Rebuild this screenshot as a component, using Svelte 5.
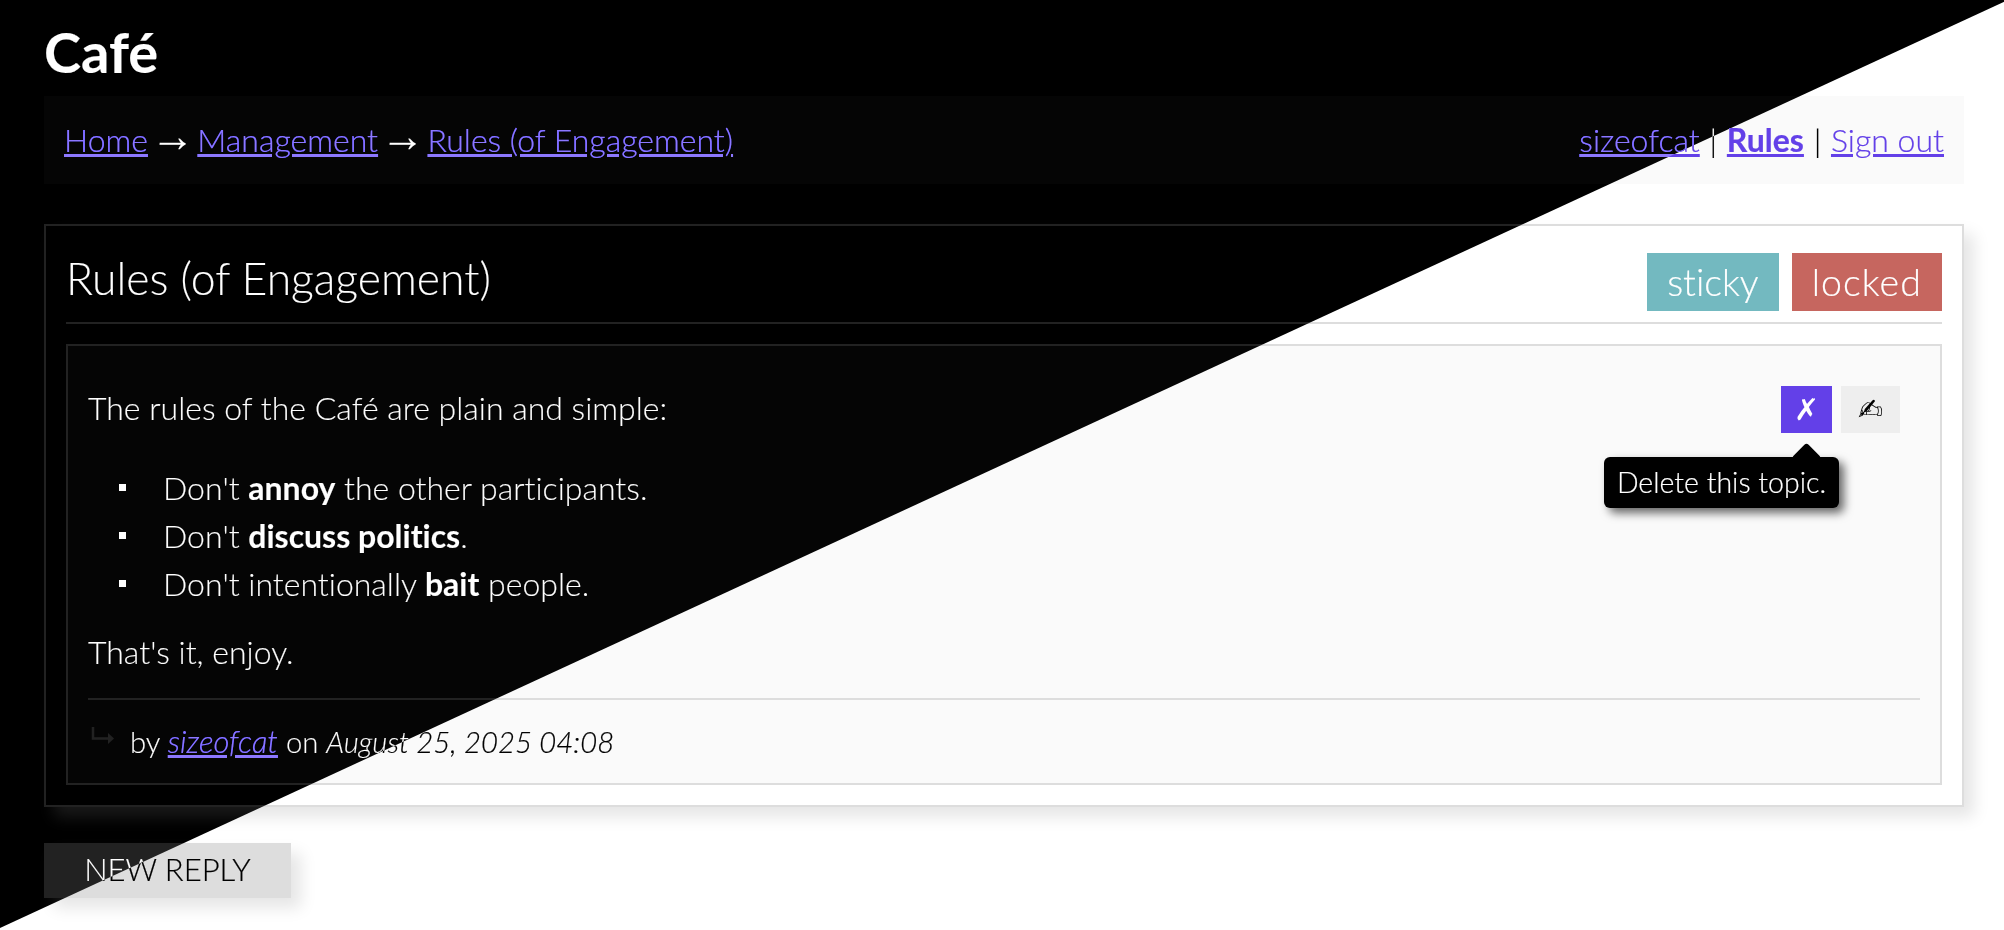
<script lang="ts">
  const rules = [
    { a: "Don't ", b: "annoy", c: " the other participants." },
    { a: "Don't ", b: "discuss politics", c: "." },
    { a: "Don't intentionally ", b: "bait", c: " people." },
  ];
</script>

<div class="page">
  <h1>Café</h1>

  <nav class="bar">
    <div>
      <a href="#home">Home</a> <span class="arr">→</span>
      <a href="#management">Management</a> <span class="arr">→</span>
      <a href="#rules">Rules (of Engagement)</a>
    </div>
    <div>
      <a href="#me">sizeofcat</a> <span class="sep">|</span>
      <a href="#rules" class="cur">Rules</a> <span class="sep">|</span>
      <a href="#out">Sign out</a>
    </div>
  </nav>

  <section class="topic">
    <header class="head">
      <h2>Rules (of Engagement)</h2>
      <div class="tags">
        <span class="tag sticky">sticky</span>
        <span class="tag locked">locked</span>
      </div>
    </header>

    <article class="post">
      <div class="top">
        <p>The rules of the Café are plain and simple:</p>
        <div class="actions">
          <div class="delwrap">
            <button class="btn del">✗</button>
            <div class="tip">Delete this topic.</div>
          </div>
          <button class="btn edit">✍</button>
        </div>
      </div>
      <ul>
        {#each rules as r}
          <li>{r.a}<b>{r.b}</b>{r.c}</li>
        {/each}
      </ul>
      <p class="end">That's it, enjoy.</p>
      <footer class="meta">
        <svg class="ret" width="24" height="18" viewBox="0 0 24 18" aria-hidden="true">
          <path d="M2 1V12.5H19" fill="none" stroke="currentColor" stroke-width="2.5" />
          <path d="M17 7l6 5.5-6 5.5z" fill="currentColor" />
        </svg>
        <span>by <a href="#me" class="who"><em>sizeofcat</em></a> on <em>August 25, 2025 04:08</em></span>
      </footer>
    </article>
  </section>

  <button class="reply">NEW REPLY</button>

  <!-- flips everything under the top-left triangle to the dark theme -->
  <svg class="defs" width="0" height="0" aria-hidden="true">
    <filter id="flip-dark" color-interpolation-filters="sRGB" x="0" y="0" width="100%" height="100%">
      <!-- greys invert; the accent purple lands on the lighter dark-theme purple -->
      <feColorMatrix
        type="matrix"
        values="0.0154 -0.7152 -0.3002 0 1
                0.1724 -0.7152 -0.4572 0 1
               -1.2126 -0.7152  0.9278 0 1
                0 0 0 1 0"
      />
    </filter>
  </svg>
  <div class="flip"></div>
</div>

<style>
  :global(body) {
    background: #fff;
  }
  .page {
    position: relative;
    height: 930px;
    box-sizing: border-box;
    padding: 0 40px 0 44px;
    overflow: hidden;
    background: #fff;
    color: #000;
    font-family: Lato, "Noto Sans", sans-serif;
    font-size: 32px;
    font-weight: 300;
    font-variant-ligatures: none;
    -webkit-text-stroke: 0.2px;
    line-height: 48px;
  }
  h1 {
    margin: 0;
    height: 96px;
    font-size: 56px;
    line-height: 104px;
    font-weight: 700;
  }
  a {
    color: #6340e8;
  }
  b {
    font-weight: 700;
  }
  .arr {
    margin: 0 -6px;
    font-family: "Liberation Sans", sans-serif;
    font-size: 44px;
    line-height: 0;
    vertical-align: 1px;
  }
  .sep {
    margin: 0 1px;
  }
  .bar {
    display: flex;
    justify-content: space-between;
    align-items: center;
    height: 88px;
    padding: 0 20px;
    background: #fafafa;
  }
  .cur {
    font-weight: 700;
  }
  .topic {
    margin-top: 40px;
    padding: 27px 20px 20px;
    border: 2px solid #ddd;
    box-shadow: 10px 10px 15px rgba(0, 0, 0, 0.1);
  }
  .head {
    display: flex;
    justify-content: space-between;
    align-items: center;
    padding-bottom: 11px;
    border-bottom: 2px solid #ddd;
  }
  h2 {
    margin: 0 0 8px;
    font-size: 44.5px;
    line-height: 50px;
    font-weight: 300;
  }
  .tags {
    display: flex;
    gap: 13px;
  }
  .tag {
    padding: 0 20px;
    font-size: 37.5px;
    line-height: 58px;
    color: #fff;
  }
  .sticky {
    background: #73b9c0;
  }
  .locked {
    background: #c6665f;
    letter-spacing: 1.1px;
  }
  .post {
    margin-top: 20px;
    padding: 0 20px 17px;
    border: 2px solid #ddd;
    background: #fafafa;
  }
  .top {
    display: flex;
    justify-content: space-between;
    padding-top: 40px;
  }
  .top p {
    margin-top: -2px;
  }
  p {
    margin: 0;
  }
  .actions {
    display: flex;
    gap: 9px;
    margin-right: 20px;
  }
  .delwrap {
    position: relative;
  }
  .btn {
    display: block;
    height: 47px;
    padding: 0;
    border: 0;
    font-family: "DejaVu Sans", sans-serif;
    font-size: 30px;
    line-height: 47px;
    -webkit-text-stroke: 0;
  }
  .del {
    width: 51px;
    background: #6340e8;
    color: #fff;
    font-weight: 700;
  }
  .edit {
    width: 59px;
    background: #eee;
    color: #000;
  }
  .tip {
    position: absolute;
    top: 71px;
    right: -7px;
    width: 235px;
    height: 51px;
    box-sizing: border-box;
    border-radius: 6px;
    background: #000;
    color: #fff;
    font-size: 28.5px;
    line-height: 50px;
    text-align: center;
    white-space: nowrap;
    box-shadow: 5px 5px 10px rgba(0, 0, 0, 0.6);
  }
  .tip::before {
    content: "";
    position: absolute;
    left: 192px;
    top: -10px;
    width: 21px;
    height: 21px;
    border-radius: 3px;
    background: #000;
    transform: rotate(45deg);
  }
  ul {
    margin: 31px 0 0;
    padding: 0 0 0 75px;
    list-style: none;
  }
  li {
    position: relative;
  }
  li::before {
    content: "";
    position: absolute;
    left: -44px;
    top: 20px;
    width: 7px;
    height: 7px;
    background: #000;
  }
  .end {
    margin-top: 20px;
  }
  .meta {
    display: flex;
    margin-top: 22px;
    padding-top: 17px;
    border-top: 2px solid #ddd;
    font-size: 29.3px;
  }
  .who {
    font-size: 31px;
  }
  .ret {
    flex: none;
    margin: 9px 15px 0 3px;
    color: #ddd;
  }
  .reply {
    display: block;
    width: 247px;
    height: 55px;
    margin-top: 36px;
    padding: 0 0 3px;
    border: 0;
    background: #ddd;
    color: #000;
    font-family: inherit;
    font-size: 31px;
    font-weight: 300;
    box-shadow: 10px 10px 15px rgba(0, 0, 0, 0.1);
  }
  .defs {
    position: absolute;
  }
  .flip {
    position: absolute;
    inset: 0;
    pointer-events: none;
    clip-path: polygon(0 0, 2008px 0, 0 928px);
    backdrop-filter: url(#flip-dark);
  }
</style>
